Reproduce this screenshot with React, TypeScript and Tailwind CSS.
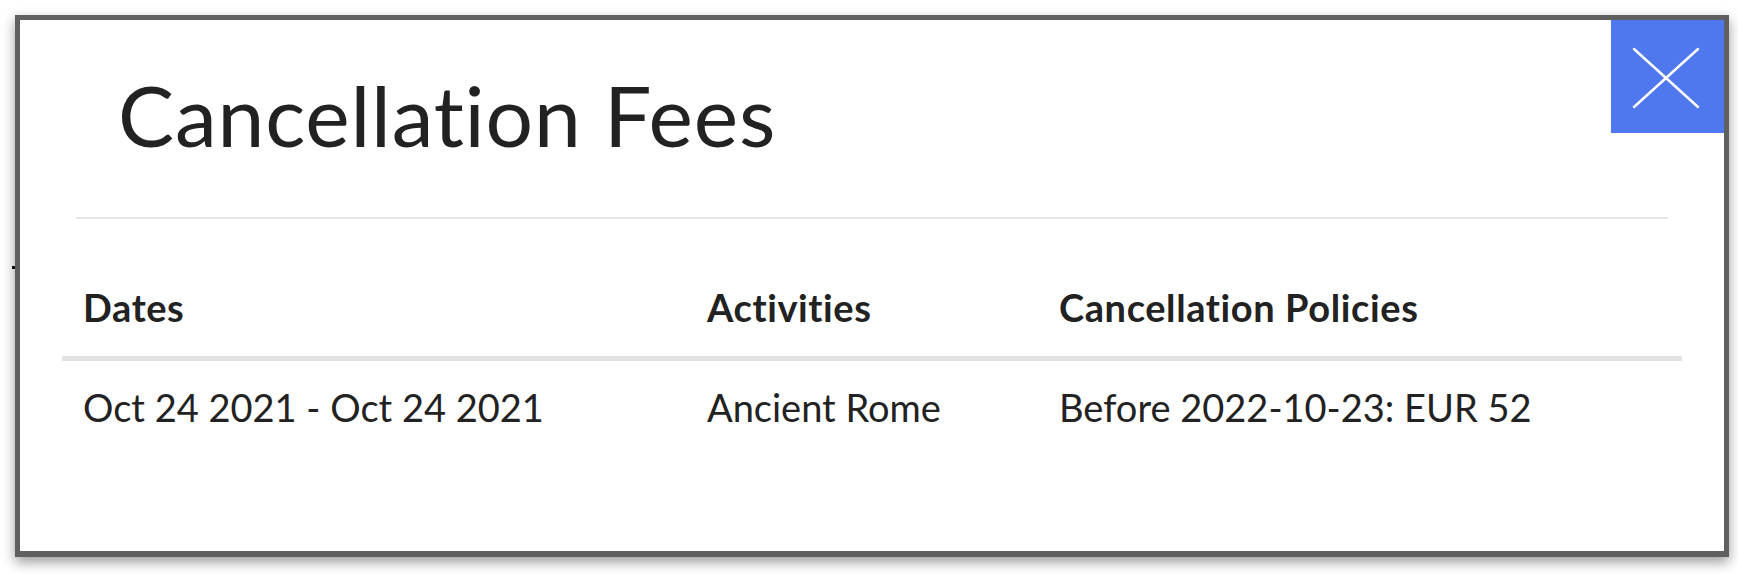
export default function App() {
  const rows = [
    {
      dates: "Oct 24 2021 - Oct 24 2021",
      activity: "Ancient Rome",
      policy: "Before 2022-10-23: EUR 52",
    },
  ];

  return (
    <div
      className="relative min-h-[574px] w-[1738px] bg-white p-[15px] text-[#222] [font-variant-ligatures:none]"
      style={{ fontFamily: "Lato, 'Open Sans', sans-serif" }}
    >
      {/* bits of the page behind the modal */}
      <div className="absolute left-[12px] top-[266px] h-[3px] w-[4px] bg-[#111]" />
      <div className="absolute left-[1727px] top-[250px] h-[20px] w-[2px] bg-[#333]" />

      <div className="relative h-[542px] w-[1714px] border-[5px] border-b-[6px] border-[#5f5f5f] bg-white shadow-[0_5px_12px_rgba(0,0,0,0.4)]">
        <button
          type="button"
          className="absolute right-0 top-0 flex h-[113px] w-[113px] items-center justify-center bg-[#4f78ee]"
        >
          <svg width="113" height="113" viewBox="0 0 113 113" fill="none">
            <path
              d="M23 29L87 87M87 29L23 87"
              stroke="white"
              strokeWidth="2.5"
              strokeLinecap="round"
            />
          </svg>
        </button>

        <div className="pt-[45px]">
          <div className="mx-[56px] border-b-2 border-[#e6e6e6] pb-[51px] pl-[42px]">
            <h1 className="text-[84px] leading-[1.2] font-normal tracking-[0.8px]">
              Cancellation Fees
            </h1>
          </div>

          <div className="mx-[42px] mt-[60px] text-[38px] leading-[1.5]">
            <div className="grid grid-cols-[622px_354px_1fr] border-b-[5px] border-[#e2e2e2] pb-[20px] font-bold tracking-[0.6px]">
              <div className="pl-[21px]">Dates</div>
              <div className="pl-[23px]">Activities</div>
              <div className="pl-[21px]">Cancellation Policies</div>
            </div>
            {rows.map((row) => (
              <div
                key={row.dates}
                className="grid grid-cols-[622px_354px_1fr] pt-[18px]"
              >
                <div className="pl-[21px]">{row.dates}</div>
                <div className="pl-[23px]">{row.activity}</div>
                <div className="pl-[21px]">{row.policy}</div>
              </div>
            ))}
          </div>
        </div>
      </div>
    </div>
  );
}
